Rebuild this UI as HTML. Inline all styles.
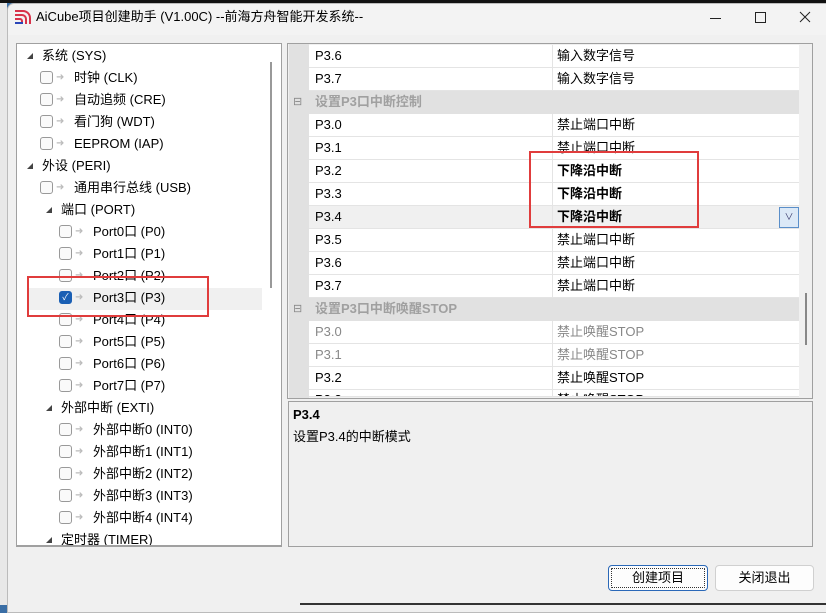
<!DOCTYPE html>
<html><head><meta charset="utf-8"><style>
*{margin:0;padding:0;box-sizing:border-box}
body{width:826px;height:605px;overflow:hidden;background:#3a6ea5;font-family:"Liberation Sans","Noto Sans CJK SC",sans-serif;font-size:13px;color:#000;position:relative}
.abs{position:absolute}
#win{left:7px;top:3px;width:830px;height:610px;background:#f0f0f0;border-radius:7px 0 0 0;border:1px solid #bbb}
#title{left:0;top:0;width:100%;height:31px;background:#f3f3f3;border-radius:7px 0 0 0}
.t{position:absolute;white-space:nowrap;line-height:22px}
.cb{position:absolute;width:13px;height:13px;border:1px solid #999;border-radius:3px;background:#fafafa}
.ar{position:absolute;color:#bbb;font-size:10px;line-height:22px}
.tri{position:absolute;width:0;height:0;border-left:6px solid transparent;border-bottom:6px solid #444}
.row{position:absolute;left:309px;width:490px;height:23px;border-bottom:1px solid #e4e4e4;background:#fff}
.row span{position:absolute;top:0;line-height:22px;white-space:nowrap}
.row .n{left:6px}.row .v{left:248px}
.row:before{content:"";position:absolute;left:243px;top:0;width:1px;height:23px;background:#e4e4e4}
.hd{position:absolute;left:289px;width:510px;height:23px;background:#e1e1e1;color:#a0a0a0;font-weight:bold}
.btn{position:absolute;height:26px;border:1px solid #d0d0d0;background:#fdfdfd;border-radius:4px;text-align:center;line-height:24px}
</style></head><body>
<div class="abs" style="left:0;top:0;width:826px;height:3px;background:#111"></div>
<div class="abs" style="left:0;top:3px;width:7px;height:602px;background:#e8e8e8"></div>
<div id="win" class="abs">
 <div id="title" class="abs"></div>
</div>
<svg class="abs" style="left:14px;top:9px" width="18" height="16" viewBox="0 0 18 16"><path d="M1 2h8a7 7 0 0 1 7 7v6M1 6h7a4 4 0 0 1 4 4v5M1 10h5a2 2 0 0 1 2 2v3" stroke="#d8324a" stroke-width="2" fill="none"/><path d="M1 14h8" stroke="#2b46b8" stroke-width="2"/></svg>
<div class="t" style="left:36px;top:6px;font-size:13px">AiCube项目创建助手 (V1.00C) --前海方舟智能开发系统--</div>
<svg class="abs" style="left:700px;top:8px" width="120" height="20" viewBox="0 0 120 20"><path d="M10 10.5h11" stroke="#222" stroke-width="1"/><rect x="55.5" y="4.5" width="10" height="10" fill="none" stroke="#222"/><path d="M100 4l10 10M110 4l-10 10" stroke="#222" stroke-width="1"/></svg>

<!-- tree -->
<div class="abs" style="left:16px;top:43px;width:266px;height:504px;background:#fff;border:1px solid #a0a0a0;overflow:hidden">
 <div class="abs" style="left:10px;top:244px;width:235px;height:22px;background:#f0f0f0"></div>
 <div class="abs" style="left:253px;top:18px;width:2px;height:226px;background:#999"></div>
</div>

<div class="tri" style="left:27px;top:53px"></div><div class="t" style="left:42px;top:45px">系统 (SYS)</div>
<div class="cb" style="left:40px;top:71px"></div><div class="ar" style="left:56px;top:67px">➜</div><div class="t" style="left:74px;top:67px">时钟 (CLK)</div>
<div class="cb" style="left:40px;top:93px"></div><div class="ar" style="left:56px;top:89px">➜</div><div class="t" style="left:74px;top:89px">自动追频 (CRE)</div>
<div class="cb" style="left:40px;top:115px"></div><div class="ar" style="left:56px;top:111px">➜</div><div class="t" style="left:74px;top:111px">看门狗 (WDT)</div>
<div class="cb" style="left:40px;top:137px"></div><div class="ar" style="left:56px;top:133px">➜</div><div class="t" style="left:74px;top:133px">EEPROM (IAP)</div>
<div class="tri" style="left:27px;top:163px"></div><div class="t" style="left:42px;top:155px">外设 (PERI)</div>
<div class="cb" style="left:40px;top:181px"></div><div class="ar" style="left:56px;top:177px">➜</div><div class="t" style="left:74px;top:177px">通用串行总线 (USB)</div>
<div class="tri" style="left:46px;top:207px"></div><div class="t" style="left:61px;top:199px">端口 (PORT)</div>
<div class="cb" style="left:59px;top:225px"></div><div class="ar" style="left:75px;top:221px">➜</div><div class="t" style="left:93px;top:221px">Port0口 (P0)</div>
<div class="cb" style="left:59px;top:247px"></div><div class="ar" style="left:75px;top:243px">➜</div><div class="t" style="left:93px;top:243px">Port1口 (P1)</div>
<div class="cb" style="left:59px;top:269px"></div><div class="ar" style="left:75px;top:265px">➜</div><div class="t" style="left:93px;top:265px">Port2口 (P2)</div>
<div class="cb" style="left:59px;top:291px;background:#1a5fb4;border-color:#1a5fb4;color:#fff;font-size:9px;line-height:11px;text-align:center">✓</div><div class="ar" style="left:75px;top:287px">➜</div><div class="t" style="left:93px;top:287px">Port3口 (P3)</div>
<div class="cb" style="left:59px;top:313px"></div><div class="ar" style="left:75px;top:309px">➜</div><div class="t" style="left:93px;top:309px">Port4口 (P4)</div>
<div class="cb" style="left:59px;top:335px"></div><div class="ar" style="left:75px;top:331px">➜</div><div class="t" style="left:93px;top:331px">Port5口 (P5)</div>
<div class="cb" style="left:59px;top:357px"></div><div class="ar" style="left:75px;top:353px">➜</div><div class="t" style="left:93px;top:353px">Port6口 (P6)</div>
<div class="cb" style="left:59px;top:379px"></div><div class="ar" style="left:75px;top:375px">➜</div><div class="t" style="left:93px;top:375px">Port7口 (P7)</div>
<div class="tri" style="left:46px;top:405px"></div><div class="t" style="left:61px;top:397px">外部中断 (EXTI)</div>
<div class="cb" style="left:59px;top:423px"></div><div class="ar" style="left:75px;top:419px">➜</div><div class="t" style="left:93px;top:419px">外部中断0 (INT0)</div>
<div class="cb" style="left:59px;top:445px"></div><div class="ar" style="left:75px;top:441px">➜</div><div class="t" style="left:93px;top:441px">外部中断1 (INT1)</div>
<div class="cb" style="left:59px;top:467px"></div><div class="ar" style="left:75px;top:463px">➜</div><div class="t" style="left:93px;top:463px">外部中断2 (INT2)</div>
<div class="cb" style="left:59px;top:489px"></div><div class="ar" style="left:75px;top:485px">➜</div><div class="t" style="left:93px;top:485px">外部中断3 (INT3)</div>
<div class="cb" style="left:59px;top:511px"></div><div class="ar" style="left:75px;top:507px">➜</div><div class="t" style="left:93px;top:507px">外部中断4 (INT4)</div>
<div class="tri" style="left:46px;top:537px"></div><div class="t" style="left:61px;top:529px;height:16px;overflow:hidden">定时器 (TIMER)</div>
<div class="abs" style="left:17px;top:545px;width:264px;height:1px;background:#a0a0a0"></div>
<div class="abs" style="left:27px;top:276px;width:182px;height:41px;border:2px solid #e03c3c"></div>

<!-- grid -->
<div class="abs" style="left:287px;top:43px;width:526px;height:356px;background:#f0f0f0;border:1px solid #a0a0a0;overflow:hidden">
 <div class="abs" style="left:1px;top:0;width:20px;height:356px;background:#e1e1e1"></div>
</div>
<div class="row" style="top:45px"><span class="n">P3.6</span><span class="v">输入数字信号</span></div>
<div class="row" style="top:68px"><span class="n">P3.7</span><span class="v">输入数字信号</span></div>
<div class="hd" style="top:91px"><span class="t" style="left:4px;font-weight:normal;color:#888;font-size:11px">⊟</span><span class="t" style="left:26px">设置P3口中断控制</span></div>
<div class="row" style="top:114px"><span class="n">P3.0</span><span class="v">禁止端口中断</span></div>
<div class="row" style="top:137px"><span class="n">P3.1</span><span class="v">禁止端口中断</span></div>
<div class="row" style="top:160px"><span class="n">P3.2</span><span class="v" style="font-weight:bold">下降沿中断</span></div>
<div class="row" style="top:183px"><span class="n">P3.3</span><span class="v" style="font-weight:bold">下降沿中断</span></div>
<div class="row" style="top:206px;background:#f0f0f0"><span class="n">P3.4</span><span class="v" style="font-weight:bold">下降沿中断</span></div>
<div class="abs" style="left:779px;top:207px;width:20px;height:21px;border:1px solid #5b8fc9;background:#dce9f7;color:#336;font-size:9px;text-align:center;line-height:19px">∨</div>
<div class="row" style="top:229px"><span class="n">P3.5</span><span class="v">禁止端口中断</span></div>
<div class="row" style="top:252px"><span class="n">P3.6</span><span class="v">禁止端口中断</span></div>
<div class="row" style="top:275px"><span class="n">P3.7</span><span class="v">禁止端口中断</span></div>
<div class="hd" style="top:298px"><span class="t" style="left:4px;font-weight:normal;color:#888;font-size:11px">⊟</span><span class="t" style="left:26px">设置P3口中断唤醒STOP</span></div>
<div class="row" style="top:321px;color:#888"><span class="n">P3.0</span><span class="v">禁止唤醒STOP</span></div>
<div class="row" style="top:344px;color:#888"><span class="n">P3.1</span><span class="v">禁止唤醒STOP</span></div>
<div class="row" style="top:367px"><span class="n">P3.2</span><span class="v">禁止唤醒STOP</span></div>
<div class="row" style="top:390px;height:7px;overflow:hidden"><span class="n" style="top:-1px">P3.3</span><span class="v" style="top:-1px">禁止唤醒STOP</span></div>
<div class="abs" style="left:799px;top:44px;width:13px;height:354px;background:#f0f0f0"></div>
<div class="abs" style="left:805px;top:293px;width:2px;height:52px;background:#888"></div>
<div class="abs" style="left:529px;top:151px;width:170px;height:77px;border:2px solid #e03c3c"></div>

<!-- description -->
<div class="abs" style="left:288px;top:401px;width:525px;height:146px;border:1px solid #a0a0a0;background:#f0f0f0"></div>
<div class="t" style="left:293px;top:404px;font-weight:bold">P3.4</div>
<div class="t" style="left:293px;top:426px">设置P3.4的中断模式</div>

<div class="btn" style="left:608px;top:565px;width:100px;border:1px solid #2a68b8;outline:1px dotted #333;outline-offset:-4px">创建项目</div>
<div class="btn" style="left:715px;top:565px;width:99px">关闭退出</div>
<div class="abs" style="left:300px;top:603px;width:526px;height:2px;background:#333"></div>
</body></html>
